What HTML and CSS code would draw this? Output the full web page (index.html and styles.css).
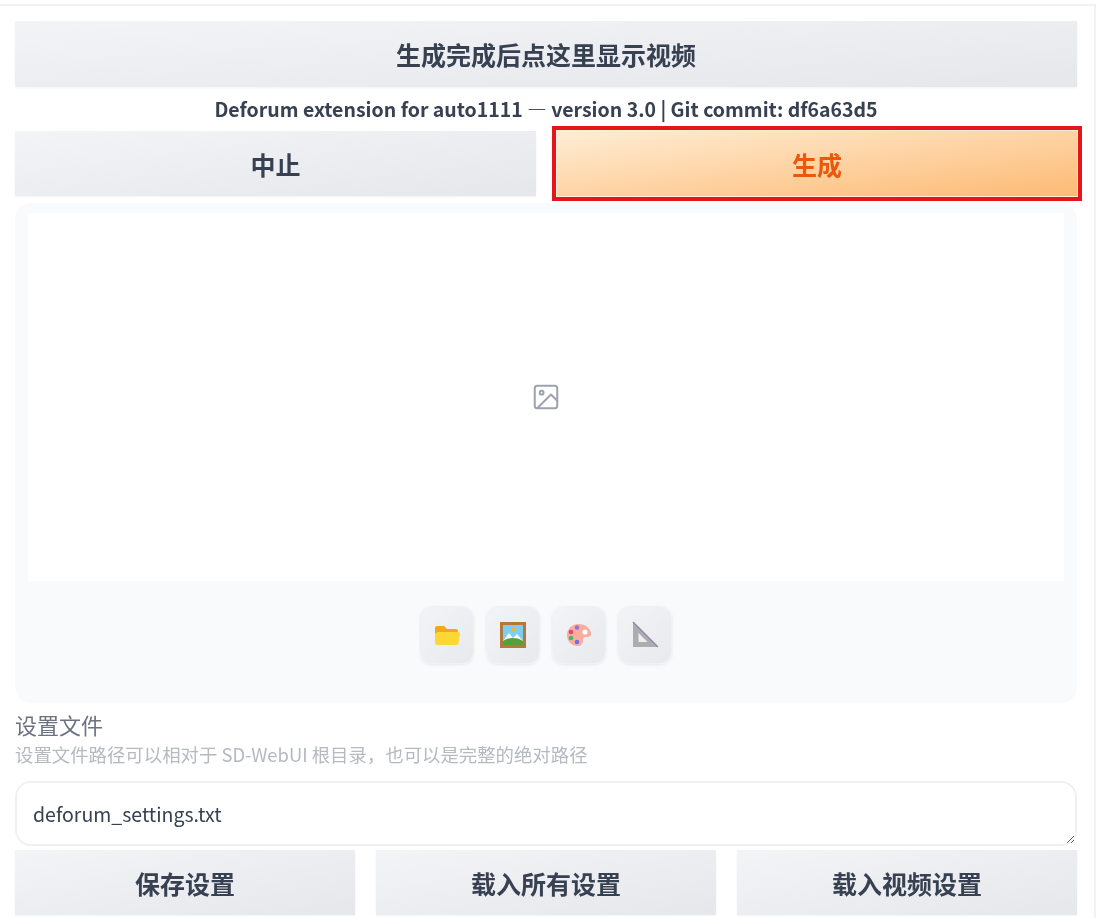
FILE: index.html
```html
<!DOCTYPE html>
<html lang="zh">
<head>
<meta charset="utf-8">
<title>Deforum</title>
<link rel="stylesheet" href="styles.css">
</head>
<body>
<main class="page">
  <button class="btn btn-full">生成完成后点这里显示视频</button>
  <p class="version">Deforum extension for auto1111 — version 3.0 | Git commit: df6a63d5</p>
  <div class="row-two">
    <button class="btn btn-row">中止</button>
    <button class="btn btn-row btn-primary">生成</button>
  </div>
  <section class="gallery">
    <div class="preview">
      <svg class="placeholder" viewBox="0 0 24 24" width="30" height="30" fill="none" stroke="#9ca3af" stroke-width="1.6" stroke-linecap="round" stroke-linejoin="round">
        <rect x="3" y="3" width="18" height="18" rx="2"/>
        <circle cx="8.5" cy="8.5" r="1.5"/>
        <path d="M21 15l-5-5L5 21"/>
      </svg>
    </div>
    <div class="tools">
      <button class="tool" aria-label="打开文件夹">
        <svg viewBox="0 0 28 28" width="28" height="28">
          <path d="M2 7a2 2 0 0 1 2-2h7l3 3h9a2 2 0 0 1 2 2v3H2z" fill="#f6a623"/>
          <path d="M6 11h19a2 2 0 0 1 2 2.300l-1.500 9A2 2 0 0 1 23.500 24H4a2 2 0 0 1-2-2v-7a4 4 0 0 1 4-4z" fill="#fdd835"/>
        </svg>
      </button>
      <button class="tool" aria-label="图库">
        <svg viewBox="0 0 28 28" width="28" height="28">
          <rect x="1" y="1" width="26" height="26" fill="#b5783c"/>
          <rect x="4" y="4" width="20" height="20" fill="#7fcdf0"/>
          <circle cx="15" cy="8" r="2.200" fill="#f9b233"/>
          <path d="M4 20l6-8 4 5 4-4 6 7v4H4z" fill="#f4fbf8"/>
          <path d="M4 20c5-4 14-4 20 0v4H4z" fill="#5a9e3c"/>
        </svg>
      </button>
      <button class="tool" aria-label="局部重绘">
        <svg viewBox="0 0 28 28" width="28" height="28">
          <path d="M13 3c7 0 13 4 13 10 0 3-3 3-5 3-2.500 0-3 1.500-3 3.500 0 3-2 5.500-5 5.500C6 25 2 20 2 14 2 8 7 3 13 3z" fill="#f8ad9f"/>
          <circle cx="20" cy="11" r="2.600" fill="#fff"/>
          <circle cx="12" cy="6.500" r="2.300" fill="#9575cd"/>
          <circle cx="6" cy="11" r="2.300" fill="#ec407a"/>
          <circle cx="6" cy="17" r="2.300" fill="#3dbb62"/>
          <circle cx="12" cy="21" r="2.300" fill="#6f6fe0"/>
        </svg>
      </button>
      <button class="tool" aria-label="额外">
        <svg viewBox="0 0 28 28" width="28" height="28">
          <path fill-rule="evenodd" d="M2 1l25 25H2zM7.500 12v9h9z" fill="#adadb0"/>
          <path d="M2 1l25 25" stroke="#9487ab" stroke-width="1.500" fill="none"/>
        </svg>
      </button>
    </div>
  </section>
  <label class="field">
    <span class="field-title">设置文件</span>
    <span class="field-info">设置文件路径可以相对于 SD-WebUI 根目录，也可以是完整的绝对路径</span>
    <textarea class="field-input" rows="1">deforum_settings.txt</textarea>
  </label>
  <div class="row-three">
    <button class="btn btn-row">保存设置</button>
    <button class="btn btn-row">载入所有设置</button>
    <button class="btn btn-row">载入视频设置</button>
  </div>
</main>
</body>
</html>
```
FILE: styles.css
```css
* { box-sizing: border-box; }
html, body { margin: 0; padding: 0; background: #fff; }
body {
  height: 918px;
  overflow: hidden;
  font-family: "Noto Sans CJK SC", "Noto Sans", sans-serif;
  color: #374151;
}
.page {
  width: 1096px;
  height: 918px;
  margin-top: 4px;
  padding: 15px 17px 0 15px;
  border-top: 2px solid #f1f2f4;
  border-right: 2px solid #f1f2f4;
  filter: blur(0.6px);
  overflow: hidden;
}
.btn {
  display: block;
  border: 0;
  font-family: inherit;
  font-weight: 600;
  font-size: 25px;
  color: #374151;
  background: linear-gradient(to bottom right, #f3f4f6, #e5e7eb);
  padding: 0;
  box-shadow: 0 1px 2px rgba(0,0,0,.05);
}
.btn-full { width: 100%; height: 66px; }
.version {
  margin: 0;
  height: 44px;
  line-height: 44px;
  text-align: center;
  font-size: 19.5px;
  font-weight: 600;
  font-feature-settings: "pwid";
  color: #374151;
}
.row-two { display: flex; gap: 21px; height: 65px; }
.row-two .btn { height: 65px; }
.row-two .btn:first-child { flex: 0 0 521px; }
.btn-primary {
  flex: 1;
  color: #ea580c;
  background: linear-gradient(to bottom right, #ffedd5, #fdba74);
  box-shadow: 0 0 0 1px #fdf0d8, 0 0 0 5px #e8141c;
}
.gallery {
  margin-top: 7px;
  height: 500px;
  background: #f9fafb;
  border-radius: 16px;
  padding: 10px 13px 0;
}
.preview {
  height: 368px;
  background: #fff;
  display: flex;
  align-items: center;
  justify-content: center;
}
.tools {
  display: flex;
  justify-content: center;
  gap: 12px;
  margin-top: 25px;
}
.tool {
  width: 54px;
  height: 58px;
  padding: 0;
  border: 1px solid #f0f1f3;
  border-radius: 12px;
  background: linear-gradient(to bottom right, #f3f4f6, #e8e9ed);
  box-shadow: 0 1px 3px rgba(0,0,0,.08);
  display: flex;
  align-items: center;
  justify-content: center;
}
.field { display: block; margin-top: 7px; }
.field-title {
  display: block;
  height: 30px;
  line-height: 28px;
  font-size: 22px;
  color: #6b7280;
}
.field-info {
  display: block;
  height: 28px;
  line-height: 28px;
  font-size: 18.4px;
  color: #b4b9c2;
}
.field-input {
  display: block;
  width: 100%;
  height: 65px;
  margin-top: 13px;
  padding: 17px 16px;
  border: 2px solid #eff0f2;
  border-radius: 16px;
  background: #fff;
  font-family: inherit;
  font-size: 19.5px;
  line-height: 28px;
  color: #374151;
  outline: none;
}
.row-three { display: flex; gap: 21px; margin-top: 4px; }
.row-three .btn { flex: 1; height: 65px; }
```
